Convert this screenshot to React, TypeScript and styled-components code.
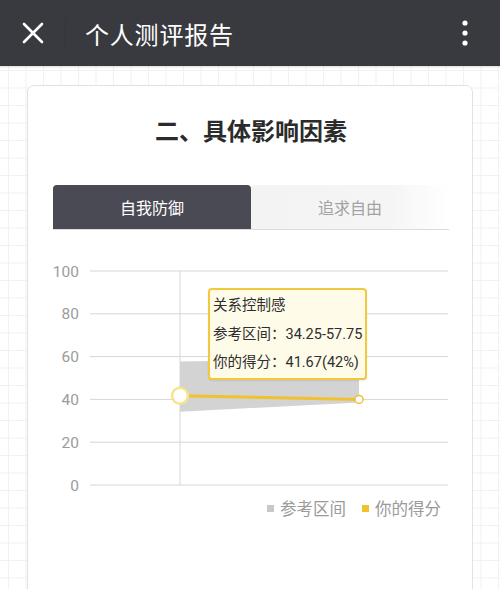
import React from "react";
import styled, { createGlobalStyle } from "styled-components";

const GlobalStyle = createGlobalStyle`
  html, body {
    margin: 0;
    padding: 0;
  }
  body {
    font-family: Roboto, "Noto Sans CJK SC", sans-serif;
    background-color: #fff;
    background-image:
      linear-gradient(to right, #f1f1f1 1px, transparent 1px),
      linear-gradient(to bottom, #f1f1f1 1px, transparent 1px);
    background-size: 17.5px 17.5px;
    background-position: 8px 70px;
    height: 589px;
    overflow: hidden;
  }
`;

const TopBar = styled.header`
  height: 66px;
  background: #393a3f;
  display: flex;
  align-items: center;
  padding: 0 24px 0 22px;
  box-sizing: border-box;
  color: #fff;
  box-shadow: 0 1px 2px rgba(0, 0, 0, 0.15);
`;

const IconButton = styled.button`
  background: none;
  border: 0;
  padding: 0;
  width: 22px;
  height: 22px;
  display: flex;
  align-items: center;
  justify-content: center;
  color: #fff;
`;

const Divider = styled.span`
  width: 1px;
  height: 32px;
  margin: 0 19px 0 21px;
  background: #34353a;
`;

const BarTitle = styled.h1`
  flex: 1;
  margin: 0 0 -1px;
  font-size: 24px;
  font-weight: 400;
  letter-spacing: 0.8px;
`;

const Page = styled.main`
  padding: 19px 27px 0 27px;
`;

const Card = styled.section`
  background: #fff;
  border: 1px solid #e2e2e2;
  border-radius: 7px;
  padding: 28px 23px 80px 25px;
  box-sizing: border-box;
`;

const Heading = styled.h2`
  margin: 0;
  text-align: center;
  font-size: 24px;
  line-height: 36px;
  font-weight: 700;
  color: #2b2b2b;
`;

const Tabs = styled.div`
  display: flex;
  margin-top: 35px;
  border-bottom: 1px solid #dcdcdc;
`;

const Tab = styled.div<{ $active?: boolean }>`
  flex: 1;
  height: 44px;
  display: flex;
  align-items: center;
  justify-content: center;
  font-size: 16px;
  border-radius: 4px 4px 0 0;
  color: ${(p) => (p.$active ? "#fff" : "#a2a2a2")};
  background: ${(p) =>
    p.$active
      ? "#4a4a55"
      : "linear-gradient(to right, #f3f3f3 0%, #f5f5f5 70%, #fff 100%)"};
`;

const ChartWrap = styled.div`
  position: relative;
  margin-top: 25px;
  height: 240px;
`;

const Tooltip = styled.div`
  position: absolute;
  left: 155px;
  top: 33px;
  width: 159px;
  height: 92px;
  box-sizing: border-box;
  border: 2px solid #f2c93a;
  border-radius: 4px;
  background: #fffbe9;
  padding: 2px 0 0 3px;
  font-size: 14.5px;
  color: #2e2e2e;
  line-height: 28.5px;
  white-space: nowrap;
  box-shadow: 0 1px 2px rgba(0, 0, 0, 0.08);
`;

const Legend = styled.div`
  display: flex;
  justify-content: flex-end;
  align-items: center;
  gap: 16px;
  padding-right: 8px;
  margin-top: 1px;
  font-size: 16.5px;
  color: #9a9a9a;
`;

const LegendItem = styled.span<{ $color: string }>`
  display: flex;
  align-items: center;
  gap: 6px;
  &::before {
    content: "";
    width: 7px;
    height: 7px;
    background: ${(p) => p.$color};
  }
`;

const ticks = [100, 80, 60, 40, 20, 0];
const yOf = (v: number) => 230 - 2.14 * v;

const Chart: React.FC = () => (
  <svg width="395" height="240" viewBox="0 0 395 240">
    {ticks.map((t) => (
      <g key={t}>
        <line x1="37" x2="395" y1={yOf(t)} y2={yOf(t)} stroke="#d6d6d6" strokeWidth="1" />
        <text
          x="26"
          y={yOf(t) + 5.5}
          textAnchor="end"
          fontSize="15.5"
          fill="#9b9b9b"
          fontFamily="Roboto, sans-serif"
        >
          {t}
        </text>
      </g>
    ))}
    <line x1="127" x2="127" y1={yOf(100)} y2={yOf(0)} stroke="#d6d6d6" strokeWidth="1" />
    {/* reference range band */}
    <polygon
      points={`127,${yOf(57.75)} 306,${yOf(59)} 306,${yOf(38.5)} 127,${yOf(34.25)}`}
      fill="#d3d3d3"
    />
    {/* score line */}
    <line x1="127" y1={yOf(41.67)} x2="306" y2={yOf(40)} stroke="#f0c230" strokeWidth="3" />
    <circle cx="127" cy={yOf(41.67)} r="8" fill="#fff" stroke="#f3e58a" strokeWidth="2.5" />
    <circle cx="306" cy={yOf(40)} r="4" fill="#fff" stroke="#f0c230" strokeWidth="1.5" />
  </svg>
);

const App: React.FC = () => (
  <>
    <GlobalStyle />
    <TopBar>
      <IconButton aria-label="close">
        <svg width="22" height="22" viewBox="0 0 22 22">
          <path d="M2 2 L20 20 M20 2 L2 20" stroke="#fff" strokeWidth="2.6" strokeLinecap="round" />
        </svg>
      </IconButton>
      <Divider />
      <BarTitle>个人测评报告</BarTitle>
      <IconButton aria-label="more">
        <svg width="6" height="26" viewBox="0 0 6 26">
          <circle cx="3" cy="3" r="2.6" fill="#fff" />
          <circle cx="3" cy="13" r="2.6" fill="#fff" />
          <circle cx="3" cy="23" r="2.6" fill="#fff" />
        </svg>
      </IconButton>
    </TopBar>
    <Page>
      <Card>
        <Heading>二、具体影响因素</Heading>
        <Tabs>
          <Tab $active>自我防御</Tab>
          <Tab>追求自由</Tab>
        </Tabs>
        <ChartWrap>
          <Chart />
          <Tooltip>
            <div>关系控制感</div>
            <div>参考区间：34.25-57.75</div>
            <div>你的得分：41.67(42%)</div>
          </Tooltip>
        </ChartWrap>
        <Legend>
          <LegendItem $color="#c8c8c8">参考区间</LegendItem>
          <LegendItem $color="#f0c230">你的得分</LegendItem>
        </Legend>
      </Card>
    </Page>
  </>
);

export default App;
